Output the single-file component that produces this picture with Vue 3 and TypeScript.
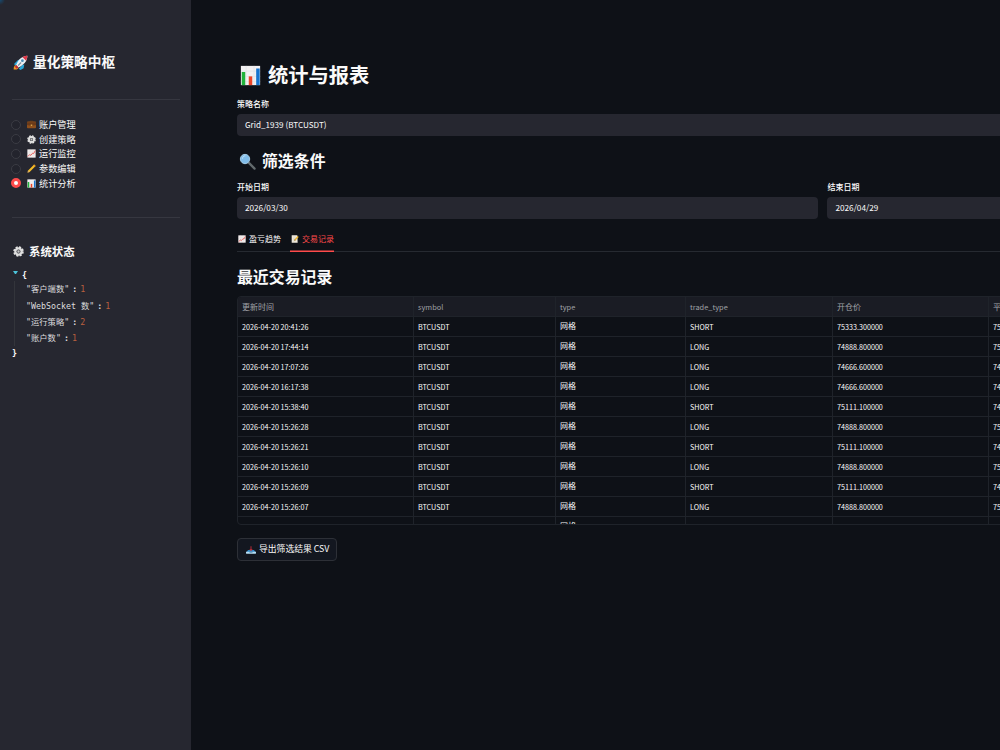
<script setup lang="ts">
import { h, type FunctionalComponent, type VNode } from 'vue'

type Shape = [string, Record<string, string | number>]

const glyphs: Record<string, Shape[]> = {
  rocket: [
    ['path', { d: 'M2 14 8 8l5-1-5 9-5 1z', fill: '#2aa7d8' }],
    ['path', { d: 'M9 22l6-6 3-1-1 6-5 3z', fill: '#2aa7d8' }],
    ['path', { d: 'M1 23c0-5 2-7 5-7l3 3c0 3-3 5-8 4z', fill: '#f49b22' }],
    ['path', { d: 'M5 16C8 7 14 2 23 1c0 9-6 14-14 19z', fill: '#e9f0f5' }],
    ['path', { d: 'M15 3c3-1 5-2 8-2 0 3-1 5-2 8z', fill: '#dd3848' }],
    ['path', { d: 'M5 16l4 4-3 2-3-3z', fill: '#bd2b38' }],
    ['circle', { cx: 15, cy: 9, r: 2.2, fill: '#4a8eb7' }],
    ['path', { d: 'M8 17l5-5', stroke: '#7d8b96', 'stroke-width': 1.8 }],
  ],
  briefcase: [
    ['path', { d: 'M8 6V3h8v3', fill: 'none', stroke: '#633512', 'stroke-width': 2 }],
    ['rect', { x: 0, y: 4, width: 24, height: 18, rx: 2, fill: '#8f501c' }],
    ['path', { d: 'M0 6h24v7l-10 2h-4l-10-2z', fill: '#6a3a19' }],
    ['rect', { x: 10, y: 12, width: 4, height: 4, fill: '#d8a24b' }],
  ],
  gear: [
    ['circle', { cx: 12, cy: 12, r: 9.5, fill: 'none', stroke: '#e5e5e5', 'stroke-width': 4, 'stroke-dasharray': '4.5 2.96' }],
    ['circle', { cx: 12, cy: 12, r: 6.8, fill: 'none', stroke: '#dedede', 'stroke-width': 5 }],
    ['circle', { cx: 12, cy: 12, r: 4, fill: '#77787c' }],
    ['circle', { cx: 12, cy: 12, r: 2, fill: '#c9c9c9' }],
  ],
  trend: [
    ['rect', { x: 1, y: 1, width: 22, height: 22, fill: '#f3eeee' }],
    ['path', { d: 'M1 8h22M1 15h22M8 1v22M16 1v22', stroke: '#e0dcdd', 'stroke-width': 1 }],
    ['path', { d: 'M2 20l5-5 3 2 5-6 3 1 4-8', fill: 'none', stroke: '#e44b46', 'stroke-width': 2.2 }],
  ],
  pencil: [
    ['path', { d: 'M1 23l2-6L19 1l4 4L7 21z', fill: '#f4bd27' }],
    ['path', { d: 'M19 1l4 4-3 3-4-4z', fill: '#e69a20' }],
    ['path', { d: 'M1 23l2-6 4 4z', fill: '#d8ae78' }],
    ['path', { d: 'M1 23l1-3 2 2z', fill: '#222' }],
  ],
  bars: [
    ['rect', { x: 1, y: 1, width: 22, height: 22, fill: '#f3f1f3' }],
    ['path', { d: 'M1 7h22M1 13h22M1 19h22M7 1v22M16 1v22', stroke: '#e0e1e4', 'stroke-width': 0.7 }],
    ['rect', { x: 2, y: 8, width: 4, height: 15, fill: '#20b33b' }],
    ['rect', { x: 10, y: 13, width: 4, height: 10, fill: '#ed4427' }],
    ['rect', { x: 18.5, y: 4, width: 4, height: 19, fill: '#1774cf' }],
  ],
  search: [
    ['path', { d: 'M14 14l8 8', stroke: '#626a6d', 'stroke-width': 3.2, 'stroke-linecap': 'round' }],
    ['circle', { cx: 8.5, cy: 8.5, r: 6.6, fill: '#80bce9', stroke: '#a5cbe4', 'stroke-width': 1.4 }],
    ['path', { d: 'M5 8c0-3 2-4 4-4', fill: 'none', stroke: '#c4e4f8', 'stroke-width': 1.4 }],
  ],
  memo: [
    ['path', { d: 'M2 1h17l1 22H2z', fill: '#f0eadc' }],
    ['path', { d: 'M5 6h10M5 10h10M5 14h7M5 18h8', stroke: '#c2bfb5', 'stroke-width': 1.2 }],
    ['path', { d: 'M10 17l1-4 9-10 3 3-9 10z', fill: '#efb62d' }],
    ['path', { d: 'M10 17l1-4 3 3z', fill: '#695b3d' }],
  ],
  inbox: [
    ['path', { d: 'M5 12h14l4 5H1z', fill: '#3187c5' }],
    ['path', { d: 'M0 16h24v4q0 1-1 1H1q-1 0-1-1z', fill: '#b6dff5' }],
    ['path', { d: 'M7 16h10l-2 2H9z', fill: '#326c99' }],
    ['path', { d: 'M12 3v9', stroke: '#a82a36', 'stroke-width': 2.6 }],
    ['path', { d: 'M8 10h8l-4 5z', fill: '#c9303d' }],
  ],
}

const Glyph: FunctionalComponent<{ name: string }> = (props): VNode =>
  h('svg', { viewBox: '0 0 24 24', 'aria-hidden': 'true' }, glyphs[props.name].map(([tag, attrs]) => h(tag, attrs)))
Glyph.props = ['name']

const nav = [
  { icon: 'briefcase', label: '账户管理' },
  { icon: 'gear', label: '创建策略' },
  { icon: 'trend', label: '运行监控' },
  { icon: 'pencil', label: '参数编辑' },
  { icon: 'bars', label: '统计分析' },
]
const active = '统计分析'

const status = [
  { key: '客户端数', value: 1 },
  { key: 'WebSocket 数', value: 1 },
  { key: '运行策略', value: 2 },
  { key: '账户数', value: 1 },
]

const columns = ['更新时间', 'symbol', 'type', 'trade_type', '开仓价', '平仓价']

const trades: [string, string, string, string][] = [
  ['20:41:26', 'SHORT', '75333.300000', '75111.100000'],
  ['17:44:14', 'LONG', '74888.800000', '75111.100000'],
  ['17:07:26', 'LONG', '74666.600000', '74888.800000'],
  ['16:17:38', 'LONG', '74666.600000', '74888.800000'],
  ['15:38:40', 'SHORT', '75111.100000', '74888.800000'],
  ['15:26:28', 'LONG', '74888.800000', '75111.100000'],
  ['15:26:21', 'SHORT', '75111.100000', '74888.800000'],
  ['15:26:10', 'LONG', '74888.800000', '75111.100000'],
  ['15:26:09', 'SHORT', '75111.100000', '74888.800000'],
  ['15:26:07', 'LONG', '74888.800000', '75111.100000'],
  ['15:26:05', 'SHORT', '75111.100000', '74888.800000'],
]
const rows = trades.map(([time, side, open, close]) => [`2026-04-20 ${time}`, 'BTCUSDT', '网格', side, open, close])
</script>

<template>
  <div class="app">
    <aside class="sidebar">
      <h2 class="brand"><Glyph name="rocket" class="ico" />量化策略中枢</h2>
      <hr />
      <nav class="nav">
        <label v-for="item in nav" :key="item.label" class="nav-item">
          <span class="radio" :class="{ on: item.label === active }"></span>
          <Glyph :name="item.icon" class="ico" />
          <span class="nav-text">{{ item.label }}</span>
        </label>
      </nav>
      <hr />
      <h3 class="status-title"><Glyph name="gear" class="ico" />系统状态</h3>
      <div class="json">
        <div class="open"><i class="caret"></i><b>{</b></div>
        <div class="entries">
          <div v-for="s in status" :key="s.key" class="entry">
            <span>"{{ s.key }}"</span><b class="colon">:</b><span class="num">{{ s.value }}</span>
          </div>
        </div>
        <div class="close"><b>}</b></div>
      </div>
    </aside>

    <main class="main">
      <div class="content">
        <h1 class="title"><Glyph name="bars" class="ico" />统计与报表</h1>
        <div class="label">策略名称</div>
        <div class="field select">Grid_1939 (BTCUSDT)</div>
        <h2 class="filter-title"><Glyph name="search" class="ico" />筛选条件</h2>
        <div class="dates">
          <div>
            <div class="label">开始日期</div>
            <div class="field">2026/03/30</div>
          </div>
          <div>
            <div class="label">结束日期</div>
            <div class="field">2026/04/29</div>
          </div>
        </div>
        <div class="tabs">
          <div class="tab"><Glyph name="trend" class="ico" />盈亏趋势</div>
          <div class="tab current"><Glyph name="memo" class="ico" />交易记录</div>
        </div>
        <h2 class="records-title">最近交易记录</h2>
        <div class="table">
          <div class="row head">
            <div v-for="c in columns" :key="c" class="cell">{{ c }}</div>
          </div>
          <div v-for="r in rows" :key="r[0]" class="row">
            <div v-for="(c, i) in r" :key="i" class="cell" :class="{ kind: i === 2 }">{{ c }}</div>
          </div>
        </div>
        <button class="export"><Glyph name="inbox" class="ico" />导出筛选结果 CSV</button>
      </div>
    </main>
  </div>
</template>

<style>
body {
  background: #0e1117;
  overflow: hidden;
}
</style>

<style scoped>
.app {
  display: flex;
  width: 1000px;
  height: 750px;
  overflow: hidden;
  background: #0e1117;
  color: #fafafa;
  font-family: "Noto Sans CJK SC", sans-serif;
  font-size: 8px;
}
.app * {
  box-sizing: border-box;
}
h1,
h2,
h3 {
  margin: 0;
  padding-bottom: 2px;
  display: flex;
  align-items: center;
  font-weight: 700;
  white-space: nowrap;
}
.ico {
  flex: none;
}
.sidebar {
  flex: none;
  width: 191.4px;
  padding: 50px 11px 0 12px;
  background: radial-gradient(circle at 0 0, #174a70 0, #262730 5px);
}
.brand {
  height: 24px;
  font-size: 13.7px;
}
.brand .ico {
  width: 15px;
  height: 15px;
  margin: 2px 5px 0 1px;
}
hr {
  height: 1px;
  margin: 0;
  border: 0;
  background: #363740;
}
.brand + hr {
  margin-top: 24.5px;
}
.nav {
  padding: 18px 0 27px;
  margin-left: -1px;
}
.nav-item {
  display: flex;
  align-items: center;
  height: 14.6px;
  font-size: 9.2px;
  white-space: nowrap;
}
.nav-item .ico {
  width: 9px;
  height: 9px;
  margin: 0 3px 0 6px;
}
.nav-text {
  margin-top: -1px;
}
.radio {
  width: 10px;
  height: 10px;
  border: 1px solid #3b3c44;
  border-radius: 50%;
  background: #23242d;
}
.radio.on {
  border: 3.4px solid #ff4b4b;
  background: #fff;
}
.status-title {
  height: 22px;
  margin-top: 23px;
  font-size: 11.4px;
}
.status-title .ico {
  width: 11px;
  height: 11px;
  margin: 1px 5px 0 1px;
}
.json {
  padding-top: 4px;
  font-family: "DejaVu Sans Mono", "Noto Sans CJK SC", monospace;
  font-size: 8.3px;
  line-height: 16px;
}
.open {
  display: flex;
  height: 14px;
}
.open b {
  margin-left: -1px;
}
.caret {
  width: 5px;
  height: 3px;
  margin: 4px 5px 0 1px;
  border: solid transparent;
  border-width: 3px 2.5px 0;
  border-top-color: #4cc3d9;
}
.entries {
  margin-left: 2px;
  padding-left: 11px;
  border-left: 1px solid #33353b;
}
.entry {
  display: flex;
  height: 16.2px;
  color: #dcdcde;
}
.colon {
  margin: 0 3px;
}
.num {
  color: #b9603f;
}
.close {
  height: 14px;
  line-height: 14px;
}
.main {
  flex: 1;
  min-width: 0;
  padding: 60px 0 0 45.6px;
  overflow: hidden;
}
.content {
  width: 1172px;
}
.title {
  height: 30px;
  font-size: 20.3px;
}
.title .ico {
  width: 21px;
  height: 21px;
  margin: 2px 7px 0 3px;
}
.label {
  height: 16px;
  margin-top: 6px;
  font-weight: 500;
  line-height: 15.5px;
}
.field {
  height: 22px;
  margin-top: 2px;
  padding-left: 8px;
  border-radius: 4px;
  background: #262730;
  font-size: 8.2px;
  line-height: 21px;
}
.select {
  font-size: 8.15px;
}
.filter-title {
  height: 26px;
  margin-top: 12px;
  font-size: 15.9px;
}
.filter-title .ico {
  width: 17px;
  height: 17px;
  margin: 2px 6px 0 2px;
}
.dates {
  display: grid;
  grid-template-columns: 581px 581px;
  gap: 9.5px;
  margin-top: -1px;
}
.tabs {
  display: flex;
  gap: 9px;
  height: 23px;
  margin-top: 10px;
  box-shadow: inset 0 -1px #262a31;
}
.tab {
  display: flex;
  align-items: center;
  height: 23px;
  padding-bottom: 4px;
}
.tab .ico {
  width: 8px;
  height: 8px;
  margin: 1px 3px 0 1px;
}
.tab.current {
  color: #ff4b4b;
  box-shadow: inset 0 -1.4px #ff4b4b;
}
.records-title {
  height: 26px;
  margin-top: 12px;
  font-size: 15.9px;
}
.table {
  height: 229px;
  margin-top: 6px;
  overflow: hidden;
  border: 1px solid #1f232a;
  border-radius: 4px;
}
.row {
  display: grid;
  grid-template-columns: 176px 142px 130px 147px 156px 1fr;
  height: 20px;
}
.row.head {
  background: #1a1c24;
  color: #a0a2a7;
}
.cell {
  height: 20px;
  padding-left: 4px;
  border-right: 1px solid #1f232a;
  border-bottom: 1px solid #1f232a;
  font-size: 7.2px;
  line-height: 20px;
  white-space: nowrap;
}
.cell.kind {
  font-size: 8px;
  line-height: 18px;
}
.head .cell {
  font-size: 7.4px;
}
.head .cell:first-child,
.head .cell:nth-child(n + 5) {
  font-size: 8px;
  line-height: 19px;
}
.export {
  display: flex;
  align-items: center;
  width: 100px;
  height: 23px;
  margin-top: 13px;
  padding: 0 0 2px 8px;
  border: 1px solid #2d3037;
  border-radius: 4px;
  background: #131720;
  color: #fafafa;
  font: 8.8px "Noto Sans CJK SC", sans-serif;
  white-space: nowrap;
}
.export .ico {
  width: 10px;
  height: 10px;
  margin: 2px 3px 0 0;
}
</style>
